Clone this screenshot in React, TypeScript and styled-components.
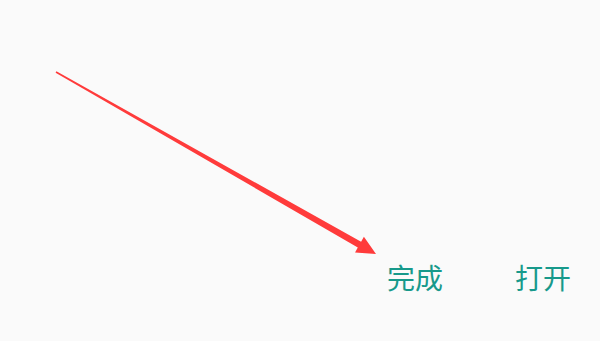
import * as React from "react";
import styled, { createGlobalStyle } from "styled-components";

const GlobalStyle = createGlobalStyle`
  html, body {
    margin: 0;
    padding: 0;
    background: #fafafa;
  }
`;

const App = () => {
  return (
    <>
      <GlobalStyle />
      <S.Page>
        <S.Stage>
          <svg width="600" height="250" viewBox="0 0 600 250">
            {/* hand-drawn pointer arrow, thin at the tail */}
            <polygon
              points="56.4,71.3 361.1,241.7 363.9,236.8 376,254 355.05,252.4 357.8,247.5 55.6,72.7"
              fill="#ff3b3b"
            />
          </svg>
        </S.Stage>
        <S.ButtonRow>
          <S.Action>完成</S.Action>
          <S.Action>打开</S.Action>
        </S.ButtonRow>
      </S.Page>
    </>
  );
};

const S = {
  Page: styled.div`
    width: 600px;
    height: 341px;
    display: flex;
    flex-direction: column;
    background: #fafafa;
    overflow: hidden;
  `,
  Stage: styled.div`
    height: 250px;
    svg {
      display: block;
      overflow: visible;
    }
  `,
  ButtonRow: styled.div`
    display: flex;
    justify-content: flex-end;
    gap: 72px;
    padding: 13px 29px 50px 0;
  `,
  Action: styled.button`
    border: none;
    background: none;
    padding: 0;
    margin: 0;
    font-family: "Noto Sans CJK SC", "Noto Sans", sans-serif;
    font-size: 28px;
    font-weight: 400;
    line-height: 28px;
    color: #17998b;
  `,
};

export default App;
